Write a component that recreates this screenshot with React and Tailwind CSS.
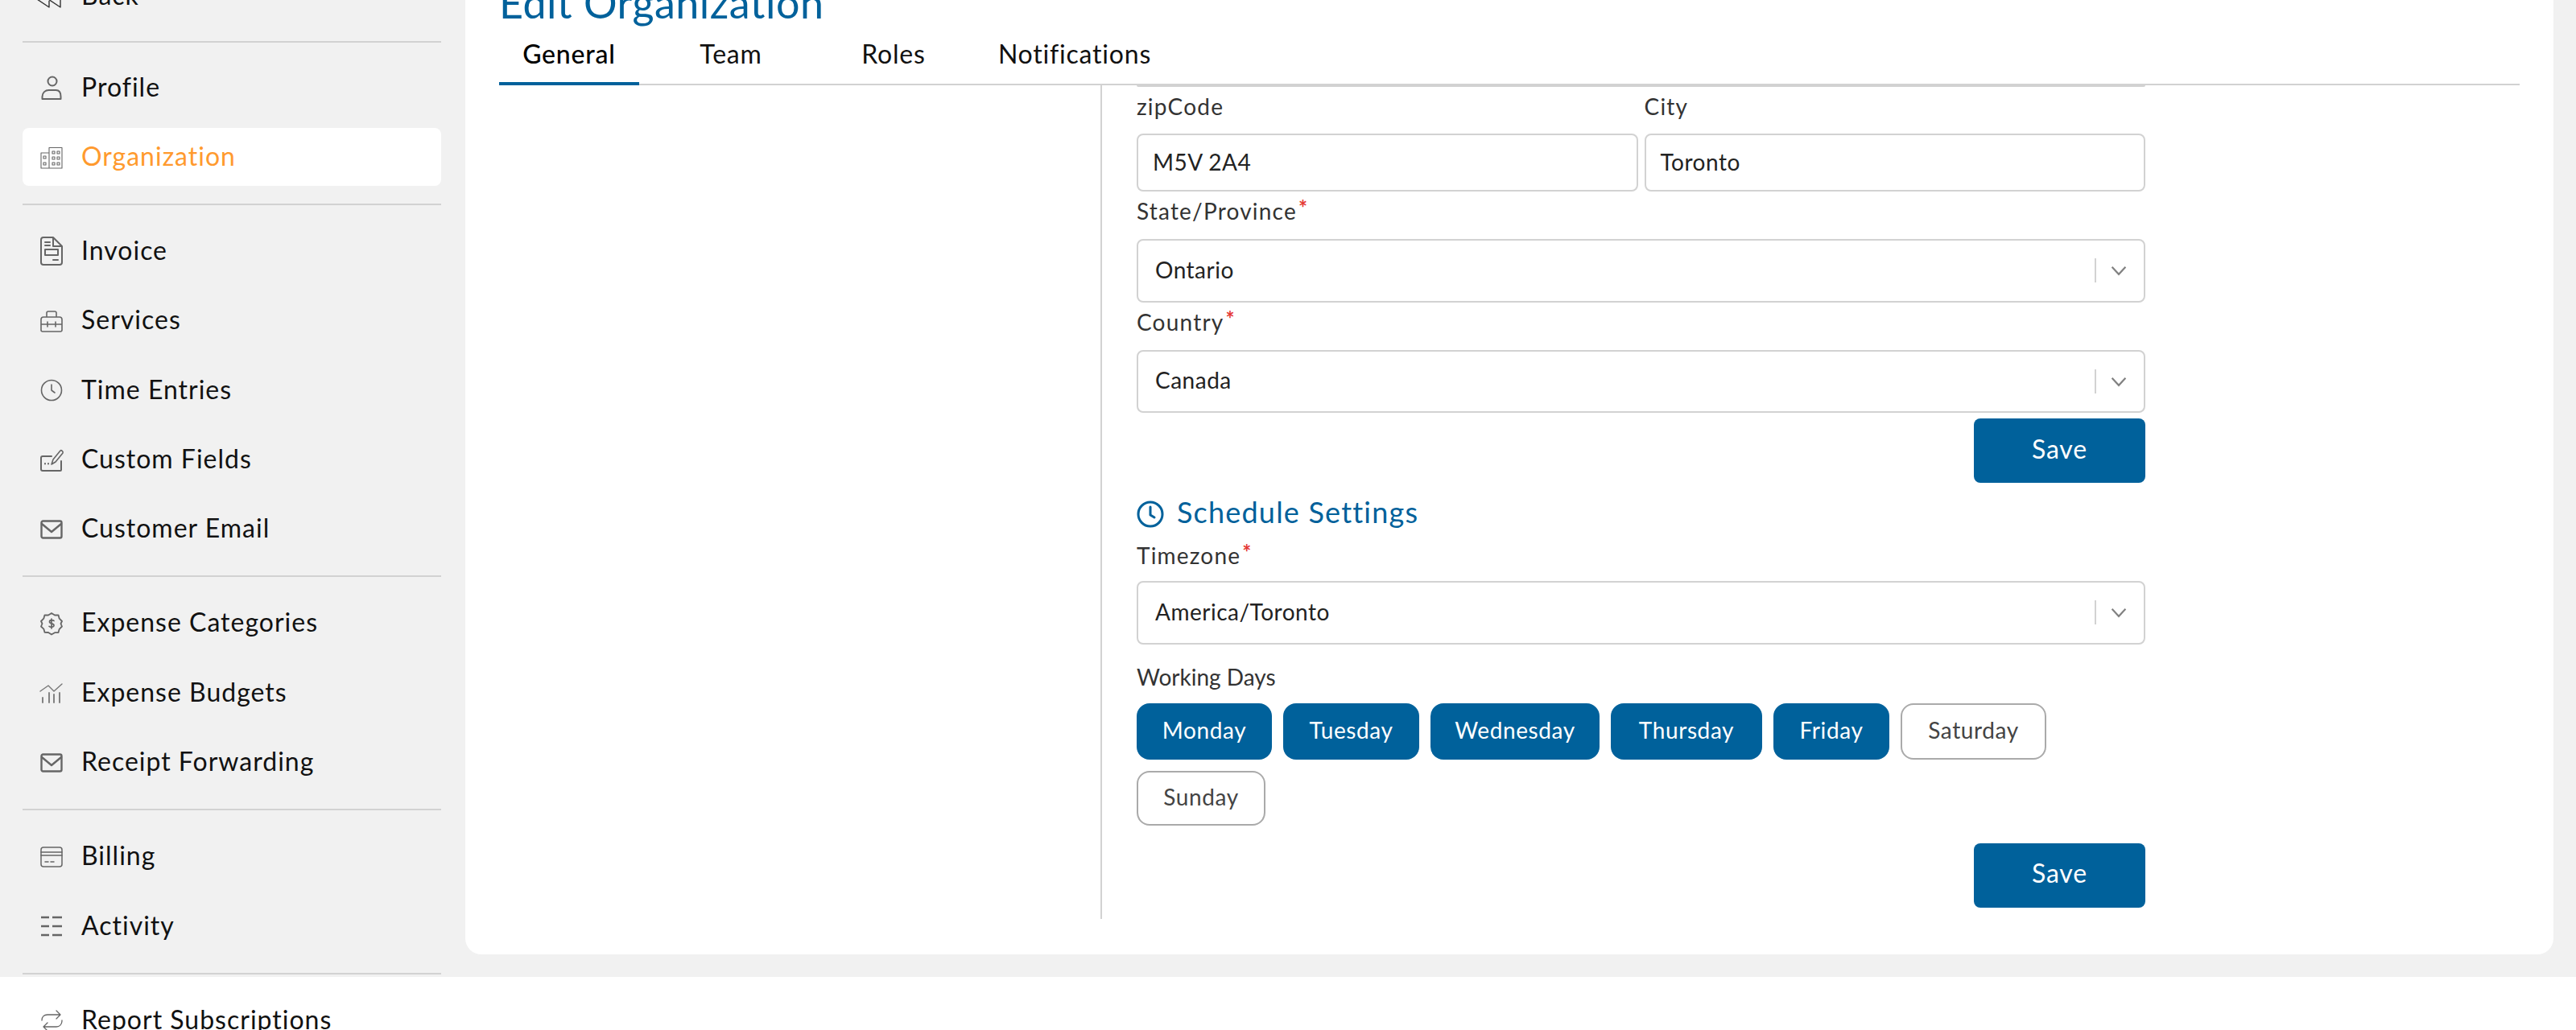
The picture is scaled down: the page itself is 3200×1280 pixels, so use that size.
import React from 'react';

const Ico = ({ children, fill }) => (
  <svg viewBox="0 0 28 28" className="w-[28px] h-[28px] shrink-0 overflow-visible" fill={fill || 'none'} stroke="#666666" strokeWidth="1.6" strokeLinecap="round" strokeLinejoin="round">
    {children}
  </svg>
);

const BackIcon = () => <Ico><path d="M11 10v18L-10 14M25 10v18L4 14" stroke="#333333" strokeWidth="1.4" /></Ico>;
const ProfileIcon = () => (
  <Ico><circle cx="15" cy="6" r="5.5" strokeWidth="2" /><path d="M2.5 28v-3c0-5 4-8 8-8h9c4 0 6 3 6 8v3z" strokeWidth="2" /></Ico>
);
const OrgIcon = () => (
  <Ico>
    <path d="M1 9h10v19H1zM11 2.5h16V28H11z" strokeWidth="1.1" />
    <path d="M4 13h3v3H4zM4 21h3v3H4zM15 7h3v3h-3zM21 7h3v3h-3zM15 14h3v3h-3zM21 14h3v3h-3zM15 21h3v3h-3zM21 21h3v3h-3z" strokeWidth="1.1" />
  </Ico>
);
const InvoiceIcon = () => (
  <svg viewBox="0 0 28 36" className="w-[28px] h-[36px] shrink-0" fill="none" stroke="#666666" strokeWidth="2" strokeLinejoin="round" strokeLinecap="round">
    <path d="M4 1h12l11 11v20a3 3 0 0 1-3 3H4a3 3 0 0 1-3-3V4a3 3 0 0 1 3-3zM16 1v11h11" />
    <path d="M6 7h6M6 11h6M6 16h16v7H6zM16 29h6" />
  </svg>
);
const ServicesIcon = () => (
  <Ico>
    <path d="M1 12a3 3 0 0 1 3-3h20a3 3 0 0 1 3 3v13a2 2 0 0 1-2 2H3a2 2 0 0 1-2-2zM8 9V4a2 2 0 0 1 2-2h8a2 2 0 0 1 2 2v5M1 18h26M9 15v6M19 15v6" />
  </Ico>
);
const ClockIcon = () => <Ico><circle cx="14" cy="14" r="12.5" /><path d="M14 7v7l4 3" /></Ico>;
const FieldsIcon = () => (
  <Ico>
    <path d="M14 9H3a2 2 0 0 0-2 2v14a2 2 0 0 0 2 2h22a1 1 0 0 0 1-1V15" strokeWidth="2" />
    <path d="M14 19l2-6 9-11c1-1 4 1 3 3l-9 11z" strokeWidth="1.6" />
    <path d="M6 18v.5M10 18v.5" strokeWidth="2" />
  </Ico>
);
const MailIcon = () => (
  <Ico><rect x="1.5" y="3.5" width="25" height="21" rx="2" strokeWidth="2.4" /><path d="M2 7l12 10 12-10" strokeWidth="2.4" /></Ico>
);
const DollarIcon = () => (
  <Ico>
    <path d="M14 1l4 2.5 4.5-.2 1.2 4.4L27 11l-1.5 3L27 17.5l-3.3 3.3-1.2 4.2-4.5.2L14 27.5 10 25l-4.5-.2-1.2-4.2L1 17.5 2.5 14 1 11l3.3-3.3 1.2-4.4 4.5.2z" strokeWidth="1.8" />
    <path d="M17 10.5c-1-1.2-5.5-1.5-5.5 1.2s5.5 1.6 5.5 4.4-4.8 2.6-6 1.2M14 8v12" strokeWidth="1.7" />
  </Ico>
);
const BudgetIcon = () => (
  <Ico>
    <path d="M0 12l10-7 7 7L27 3" strokeWidth="1.4" stroke="#777777" />
    <path d="M3 20v6M11 14v12M17 16v10M24 14v12" strokeWidth="1.8" stroke="#777777" />
  </Ico>
);
const BillingIcon = () => (
  <Ico><rect x="1" y="2" width="26" height="24" rx="3" strokeWidth="1.5" /><path d="M1 8h26M1 12h26M6 20h4M13 20h4" strokeWidth="1.5" /></Ico>
);
const ActivityIcon = () => (
  <Ico><path d="M1 3h10M15 3h12M1 14h10M15 14h12M1 25h10M15 25h12" strokeWidth="2.4" strokeLinecap="butt" /></Ico>
);
const RepeatIcon = () => (
  <Ico>
    <path d="M2 14c0-5 3-7 7-7h16l-5-5M25 7l-5 5" strokeWidth="1.3" />
    <path d="M27 14c0 5-3 8-7 8H4l5-5M4 22l5 5" strokeWidth="1.3" />
  </Ico>
);

const groups = [
  [['Back', BackIcon]],
  [['Profile', ProfileIcon], ['Organization', OrgIcon]],
  [['Invoice', InvoiceIcon], ['Services', ServicesIcon], ['Time Entries', ClockIcon], ['Custom Fields', FieldsIcon], ['Customer Email', MailIcon]],
  [['Expense Categories', DollarIcon], ['Expense Budgets', BudgetIcon], ['Receipt Forwarding', MailIcon]],
  [['Billing', BillingIcon], ['Activity', ActivityIcon]],
  [['Report Subscriptions', RepeatIcon]],
];

const Sidebar = () => (
  <div className="w-[578px] shrink-0 pl-[28px] pr-[30px] -mt-[41px] text-[32px] tracking-[1px] text-[#111]">
    {groups.map((group, i) => (
      <div key={i}>
        {i > 0 && <div className={`h-[2px] bg-[#d2d2d2] ${i === 1 ? 'my-[20px]' : 'my-[21.5px]'}`} />}
        <div className="flex flex-col gap-[14.4px]">
          {group.map(([name, Icon]) => {
            const active = name === 'Organization';
            return (
              <div key={name} className={`h-[72px] flex items-center gap-[23px] pl-[22px] rounded-[8px] ${active ? 'bg-white text-[#ff9a2e]' : ''}`}>
                <span className="w-[28px] flex justify-center"><Icon /></span>
                <span className="-mt-[3px]">{name}</span>
              </div>
            );
          })}
        </div>
      </div>
    ))}
  </div>
);

const Req = () => <span className="text-[#e53935] relative -top-[5px] text-[26px] ml-[2px] font-bold">*</span>;

const Label = ({ children, req, first }) => (
  <div className={`${first ? 'h-[58px]' : 'h-[59px]'} leading-[48px] text-[28px] tracking-[1.2px] text-[#333]`}>{children}{req && <Req />}</div>
);

const Input = ({ value }) => (
  <div className="flex-1 h-[72px] border-2 border-[#d2d2d2] rounded-[8px] px-[18px] flex items-center text-[28px] tracking-[0.5px] text-[#222]">
    <span className="-mt-[3px]">{value}</span>
  </div>
);

const Select = ({ value }) => (
  <div className="h-[78.5px] border-2 border-[#d2d2d2] rounded-[8px] pl-[21px] flex items-center text-[28px] tracking-[0.5px] text-[#222]">
    <span className="flex-1 -mt-[3px]">{value}</span>
    <span className="w-[2px] h-[30px] bg-[#d2d2d2]" />
    <svg viewBox="0 0 20 20" className="w-[24px] h-[24px] ml-[16px] mr-[19px]" fill="none" stroke="#808080" strokeWidth="1.8"><path d="M3 6.5l7 7.5 7-7.5" /></svg>
  </div>
);

const SaveBtn = () => (
  <button className="w-[213px] h-[80px] pb-[5px] rounded-[8px] bg-[#00619b] text-white text-[32px] tracking-[0.8px]">Save</button>
);

const days = [
  ['Monday', 'w-[168px] h-[70px]', true],
  ['Tuesday', 'w-[169px] h-[70px]', true],
  ['Wednesday', 'w-[210px] h-[70px]', true],
  ['Thursday', 'w-[188px] h-[70px]', true],
  ['Friday', 'w-[144px] h-[70px]', true],
  ['Saturday', 'w-[181px] h-[70px]', false],
  ['Sunday', 'w-[160px] h-[68px]', false],
];

const tabs = [
  ['General', 'w-[174px]'],
  ['Team', 'w-[228px]'],
  ['Roles', 'w-[176px]'],
  ['Notifications', 'w-[274px]'],
];

export default function App() {
  return (
    <div className="h-[1280px] overflow-hidden bg-white font-['Lato',sans-serif]">
      <div className="h-[1214px] bg-[#f1f1f1] flex">
        <Sidebar />
        <div className="flex-1 pr-[28px]">
          <div className="-mt-[29px] h-[1215px] bg-white rounded-[20px] px-[42px]">
            <div className="h-[64px] leading-[64px] text-[52px] tracking-[0.5px] text-[#00619b]">Edit Organization</div>
            <div className="h-[71px] flex border-b-2 border-[#d2d2d2] text-[32px] tracking-[0.8px] text-[#111]">
              {tabs.map(([name, w]) => (
                <div key={name} className={`${w} h-[71px] pt-[8px] leading-[48px] text-center ${name === 'General' ? 'border-b-4 border-[#00619b] font-medium text-black' : ''}`}>{name}</div>
              ))}
            </div>
            <div className="flex">
              <div className="w-[747px] shrink-0" />
              <div className="w-[1298px] border-l-2 border-[#d2d2d2] pl-[43px] pb-[14px] shrink-0">
                <div className="h-[2px] bg-[#d2d2d2] rounded-b-[4px]" />
                <div className="flex gap-[8px]">
                  <div className="flex-1"><Label first>zipCode</Label><Input value="M5V 2A4" /></div>
                  <div className="flex-1"><Label first>City</Label><Input value="Toronto" /></div>
                </div>
                <Label req>State/Province</Label>
                <Select value="Ontario" />
                <Label req>Country</Label>
                <Select value="Canada" />
                <div className="flex justify-end mt-[7px]"><SaveBtn /></div>
                <div className="flex items-center gap-[16px] mt-[22px] h-[34px] text-[36px] tracking-[1.2px] text-[#00619b]">
                  <svg viewBox="0 0 34 34" className="w-[34px] h-[34px] shrink-0" fill="none" stroke="#00619b" strokeWidth="3" strokeLinecap="round" strokeLinejoin="round"><circle cx="17" cy="17" r="15" /><path d="M17 8v10l5 3" /></svg>
                  <span className="-mt-[6px]">Schedule Settings</span>
                </div>
                <div className="mt-[10px] h-[56px] leading-[48px] text-[28px] tracking-[1.2px] text-[#333]">Timezone<Req /></div>
                <Select value="America/Toronto" />
                <div className="h-[73px] pt-[26px] leading-[28px] text-[28px] text-[#333]">Working Days</div>
                <div className="flex flex-wrap gap-x-[14px] gap-y-[14px] items-start">
                  {days.map(([d, cls, on]) => (
                    <button key={d} className={`${cls} pb-[3px] rounded-[16px] text-[28px] tracking-[0.6px] ${on ? 'bg-[#00619b] text-white' : 'border-2 border-[#aaaaaa] text-[#444]'}`}>{d}</button>
                  ))}
                </div>
                <div className="flex justify-end mt-[22px]"><SaveBtn /></div>
              </div>
            </div>
          </div>
        </div>
      </div>
    </div>
  );
}
